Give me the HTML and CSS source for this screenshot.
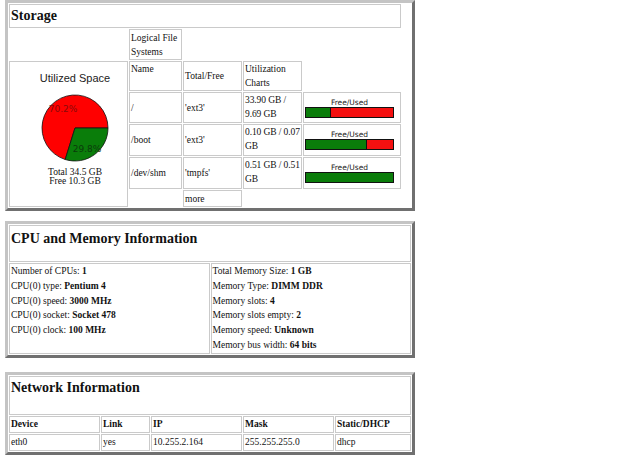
FILE: index.html
```html
<!DOCTYPE html>
<html lang="en">
<head>
    <meta charset="UTF-8">
    <title>System Information</title>
    <link rel="stylesheet" href="styles.css">
</head>
<body>
    <div class="box box-storage">
        <table class="grid storage">
            <colgroup>
                <col class="c-usage"><col class="c-name"><col class="c-type"><col class="c-size"><col class="c-chart">
            </colgroup>
            <tr class="row-title"><td colspan="5" class="title">Storage</td></tr>
            <tr class="row-lfs">
                <td class="blank"></td>
                <td>Logical File<br>Systems</td>
                <td class="blank" colspan="3"></td>
            </tr>
            <tr class="row-head">
                <td rowspan="5" class="usage">
                    <div class="usage-title">Utilized Space</div>
                    <svg class="pie" width="68" height="68" viewBox="0 0 68 68">
                        <path d="M34 34 L24.2 65.5 A33 33 0 1 1 67 34 Z" fill="#ff0000" stroke="#111" stroke-width="0.8"/>
                        <path d="M34 34 L67 34 A33 33 0 0 1 24.2 65.5 Z" fill="#0a7d0a" stroke="#111" stroke-width="0.8"/>
                        <text x="22" y="18" class="pie-label used">70.2%</text>
                        <text x="46" y="58" class="pie-label free">29.8%</text>
                    </svg>
                    <div class="usage-total">Total 34.5 GB<br>Free 10.3 GB</div>
                </td>
                <td>Name</td>
                <td class="mid">Total/Free</td>
                <td>Utilization<br>Charts</td>
                <td class="blank"></td>
            </tr>
            <tr class="row-d">
                <td class="mid">/</td>
                <td class="mid">'ext3'</td>
                <td class="size">33.90 GB /<br>9.69 GB</td>
                <td class="chart">
                    <div class="bar-label">Free/Used</div>
                    <div class="bar"><div class="bar-free" style="width: 28.6%"></div></div>
                </td>
            </tr>
            <tr class="row-e">
                <td class="mid">/boot</td>
                <td class="mid">'ext3'</td>
                <td class="size">0.10 GB / 0.07<br>GB</td>
                <td class="chart">
                    <div class="bar-label">Free/Used</div>
                    <div class="bar"><div class="bar-free" style="width: 70%"></div></div>
                </td>
            </tr>
            <tr class="row-f">
                <td class="mid">/dev/shm</td>
                <td class="mid">'tmpfs'</td>
                <td class="size">0.51 GB / 0.51<br>GB</td>
                <td class="chart">
                    <div class="bar-label">Free/Used</div>
                    <div class="bar"><div class="bar-free full" style="width: 100%"></div></div>
                </td>
            </tr>
            <tr class="row-g">
                <td class="blank"></td>
                <td class="mid">more</td>
                <td class="blank" colspan="2"></td>
            </tr>
        </table>
    </div>

    <div class="box box-cpu">
        <table class="grid wide">
            <tr class="row-cpu-title"><td colspan="2" class="title">CPU and Memory Information</td></tr>
            <tr>
                <td class="info">
                    Number of CPUs: <b>1</b><br>
                    CPU(0) type: <b>Pentium 4</b><br>
                    CPU(0) speed: <b>3000 MHz</b><br>
                    CPU(0) socket: <b>Socket 478</b><br>
                    CPU(0) clock: <b>100 MHz</b>
                </td>
                <td class="info">
                    Total Memory Size: <b>1 GB</b><br>
                    Memory Type: <b>DIMM DDR</b><br>
                    Memory slots: <b>4</b><br>
                    Memory slots empty: <b>2</b><br>
                    Memory speed: <b>Unknown</b><br>
                    Memory bus width: <b>64 bits</b>
                </td>
            </tr>
        </table>
    </div>

    <div class="box box-net">
        <table class="grid wide net">
            <colgroup>
                <col class="n-dev"><col class="n-link"><col class="n-ip"><col class="n-mask"><col class="n-dhcp">
            </colgroup>
            <tr class="row-net-title"><td colspan="5" class="title">Network Information</td></tr>
            <tr class="row-net">
                <th>Device</th><th>Link</th><th>IP</th><th>Mask</th><th>Static/DHCP</th>
            </tr>
            <tr class="row-net">
                <td>eth0</td><td>yes</td><td>10.255.2.164</td><td>255.255.255.0</td><td>dhcp</td>
            </tr>
        </table>
    </div>
</body>
</html>
```

FILE: styles.css
```css
body {
    margin: 0 0 0 5px;
    font-family: "Liberation Serif", "Times New Roman", serif;
    font-size: 9.5px;
    color: #111;
    background: #fff;
}
.box {
    width: 404px;
    border: 3px outset #c4c4c4;
    margin-bottom: 12px;
}
.box-storage {
    margin-bottom: 10px;
}
.box-cpu {
    margin-bottom: 14px;
}
.grid {
    border-collapse: separate;
    border-spacing: 1px;
    table-layout: fixed;
}
.grid td, .grid th {
    box-sizing: border-box;
    border: 1px solid #cacaca;
    padding: 0 0 0 1px;
    vertical-align: top;
    text-align: left;
    line-height: 14px;
}
.grid .blank {
    border: none;
}
.grid .mid {
    vertical-align: middle;
}
.grid .size {
    white-space: nowrap;
    overflow: hidden;
    letter-spacing: -0.1px;
}
.wide {
    width: 404px;
}
.title {
    font-size: 14px;
    font-weight: bold;
    line-height: 16px;
}
.storage {
    width: 394px;
}
.c-usage { width: 119px; }
.c-name { width: 53px; }
.c-type { width: 59px; }
.c-size { width: 59px; }
.c-chart { width: 98px; }

.row-title td { height: 24px; padding-top: 4px; }
.row-lfs td { height: 30px; padding-top: 1px; }
.row-head td { height: 30px; }
.row-d td { height: 31px; }
.row-e td { height: 32px; }
.row-f td { height: 32px; }
.row-g td { height: 17px; }

.grid .usage {
    padding: 10px 0 0 13px;
    text-align: center;
}
.usage-title {
    font-family: "Liberation Sans", Arial, sans-serif;
    font-size: 11px;
    line-height: 13px;
    color: #222;
}
.pie {
    display: block;
    margin: 9px auto 0;
}
.pie-label {
    font-family: "DejaVu Sans", sans-serif;
    font-size: 9px;
    text-anchor: middle;
}
.pie-label.used { fill: #8a0a0a; }
.pie-label.free { fill: #0b3b0b; }
.usage-total {
    margin-top: 6px;
    line-height: 9px;
}

.grid .chart {
    vertical-align: middle;
    padding: 0 0 0 1px;
}
.bar-label {
    font-family: "DejaVu Sans", sans-serif;
    font-size: 7.5px;
    line-height: 9px;
    text-align: center;
    width: 89px;
    color: #222;
}
.bar {
    box-sizing: border-box;
    width: 89px;
    height: 11px;
    border: 1px solid #111;
    background: #f41010;
    display: flex;
}
.bar-free {
    box-sizing: border-box;
    height: 100%;
    background: #0a7d0a;
    border-right: 1px solid #111;
}
.bar-free.full {
    border-right: none;
}

.row-cpu-title td { height: 37px; padding-top: 6px; }
.grid .info {
    width: 50%;
    line-height: 14.8px;
    padding-left: 1px;
}
.row-net-title td { height: 39px; padding-top: 4px; }
.net .row-net td, .net .row-net th {
    height: 17px;
    vertical-align: middle;
}
.net th {
    font-weight: bold;
}
.n-dev { width: 91px; }
.n-link { width: 49px; }
.n-ip { width: 91px; }
.n-mask { width: 91px; }
.n-dhcp { width: 76px; }
```
